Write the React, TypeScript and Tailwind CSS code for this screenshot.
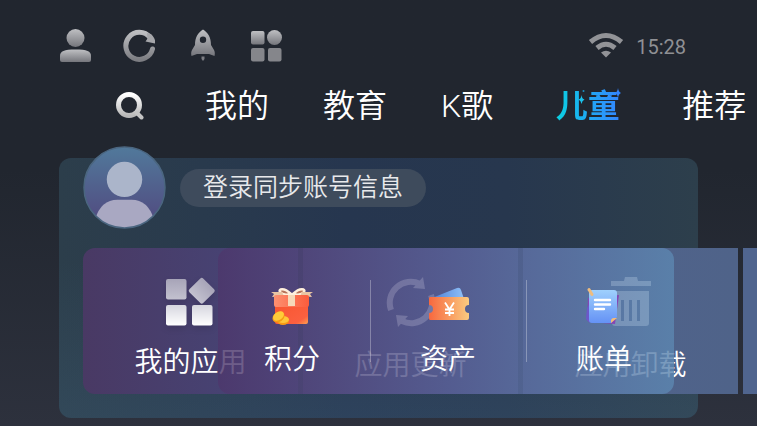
import type { ReactNode } from "react";

const tabBase = "shrink-0 whitespace-nowrap text-[32px] leading-10 text-white";

function UserIcon() {
  return (
    <svg viewBox="0 0 32 34" className="h-[34px] w-8" fill="url(#metal)">
      <circle cx="16.500" cy="10" r="9" />
      <path d="M1 28c0-5 4-6.500 15.500-6.500S32 23 32 28v4a2 2 0 0 1-2 2H3a2 2 0 0 1-2-2z" />
    </svg>
  );
}

function ReloadIcon() {
  return (
    <svg viewBox="0 0 32 34" className="h-[34px] w-8">
      <path
        d="M29.500 21A13.500 13.500 0 1 1 27 9.500"
        fill="none"
        stroke="url(#metalStroke)"
        strokeWidth="5"
        strokeLinecap="round"
      />
      <path d="M24 5l4 1c3 3 4.500 6 4.500 9.500l-10-2 2-3z" fill="#a5a6aa" />
    </svg>
  );
}

function RocketIcon() {
  return (
    <svg viewBox="0 0 32 34" className="h-[34px] w-8" fill="url(#metal)">
      <path
        fillRule="evenodd"
        d="M16 1.500c5 3 8 8 8 15.500l3 5c1 2 1 4 .500 6L22 26H10l-5.500 2c-.500-2-.500-4 .500-6l3-5C8 9.500 11 4.500 16 1.500zm0 7a3.200 3.200 0 1 0 0 6.400 3.200 3.200 0 0 0 0-6.400z"
      />
      <path d="M14.500 28.500h3V31L16 33l-1.500-2z" fill="#7c7d83" />
    </svg>
  );
}

function GridIcon() {
  return (
    <svg viewBox="0 0 32 34" className="h-[34px] w-8" fill="url(#metal)">
      <rect x="0" y="3" width="13.500" height="13.500" rx="2" />
      <circle cx="23.500" cy="9.500" r="7.500" />
      <rect x="0" y="20" width="13.500" height="13.500" rx="2" fill="#85868b" />
      <rect x="17" y="20" width="13.500" height="13.500" rx="2" fill="#85868b" />
    </svg>
  );
}

function WifiIcon() {
  return (
    <svg viewBox="0 0 36 26" className="h-[26px] w-9" fill="none" stroke="#929397" strokeWidth="5">
      <path d="M2.500 10Q18-3 33.500 10" />
      <path d="M9 16Q18 8.500 27 16" />
      <path d="M13 20.500Q18 17 23 20.500L18 25.500z" fill="#929397" stroke="none" />
    </svg>
  );
}

function SearchIcon() {
  return (
    <svg viewBox="0 0 28 28" className="h-7 w-7" fill="none" stroke="url(#silver)" strokeLinecap="round">
      <circle cx="13" cy="13" r="10.500" strokeWidth="5" />
      <path d="M21 21l4.500 4.500" stroke="#c4c4c4" strokeWidth="4" />
    </svg>
  );
}

function AppsIcon() {
  return (
    <svg viewBox="0 0 50 50" className="h-[50px] w-[50px] overflow-visible drop-shadow-md">
      <g fill="url(#lilac)">
        <rect x="0" y="2" width="20.500" height="20.500" rx="2" />
        <rect x="26" y="4" width="19.500" height="19.500" rx="2" transform="rotate(45 35.750 13.750)" />
      </g>
      <g fill="url(#snow)">
        <rect x="0" y="28" width="20.500" height="20.500" rx="2" />
        <rect x="26" y="28" width="20.500" height="20.500" rx="2" />
      </g>
    </svg>
  );
}

function UpdateIcon() {
  return (
    <svg viewBox="0 0 50 50" className="h-[50px] w-[50px]" fill="none" stroke="#fff" strokeWidth="6">
      <path d="M5 33A21 21 0 0 1 34 7" />
      <path d="M45 18A21 21 0 0 1 16 44" />
      <path d="M37 0l2 12-12-1z M12 50l-2-12 12 1z" fill="#fff" stroke="none" />
    </svg>
  );
}

function TrashIcon() {
  return (
    <svg viewBox="0 0 50 50" className="h-[50px] w-[50px]" fill="#fff">
      <path d="M5 4h13l1-4h12l1 4h13v5H5z" />
      <path
        fillRule="evenodd"
        d="M6 14h37v32a3 3 0 0 1-3 3H9a3 3 0 0 1-3-3zm9 9v21h3V23zm8 0v21h3V23zm8 0v21h3V23z"
      />
    </svg>
  );
}

function GiftIcon() {
  return (
    <svg viewBox="0 0 44 44" className="h-11 w-11">
      <path d="M21 10C14 3 8 5 10 8s7 3 11 2zM23 10c7-7 13-5 11-2s-7 3-11 2z" fill="#b77358" stroke="#fff0dc" strokeWidth="2.500" />
      <path d="M12 8L1 8l3 2-2 3 12-1zM32 8l11 0-3 2 2 3-12-1z" fill="#e9c5a3" />
      <rect x="5" y="18" width="33" height="22" rx="2" fill="url(#giftBox)" />
      <rect x="4" y="11" width="35" height="12" rx="2" fill="url(#giftLid)" />
      <path d="M18 11h7v11H18z" fill="#f6d9b9" />
      <ellipse cx="13" cy="37" rx="6" ry="4" fill="#f89a13" />
      <ellipse cx="13" cy="35.500" rx="6" ry="3.500" fill="#ffc53a" />
      <ellipse cx="8.500" cy="33" rx="6.500" ry="5" fill="#f49b12" transform="rotate(-35 8.500 33)" />
      <ellipse cx="8.500" cy="32" rx="6" ry="4" fill="#ffcb39" transform="rotate(-35 8.500 32)" />
    </svg>
  );
}

function TicketIcon() {
  return (
    <svg viewBox="0 0 44 44" className="h-11 w-11">
      <path d="M6 14L31 4q3-1 4 2l3 9z" fill="url(#ticketBack)" />
      <path
        d="M4 13h37q2 0 2 2v6a4 4 0 0 0 0 8v5q0 2-2 2H4q-1 0-1-2v-5a4 4 0 0 0 0-8v-6q0-2 1-2z"
        fill="url(#ticketFront)"
      />
      <path d="M19 18.500l4.500 7 4.500-7M23.500 25v7M19 25.500h9M19 29h9" fill="none" stroke="#fff" strokeWidth="1.800" />
    </svg>
  );
}

function BillIcon() {
  return (
    <svg viewBox="0 0 44 44" className="h-11 w-11">
      <path d="M6 14l31-3-4 29-26-2-2-2z" fill="#8545b4" />
      <path d="M5 24l3-5v20l-4-4z" fill="#6c58c9" />
      <path d="M10 6h22a3 3 0 0 1 3 3v24l-6 6H10a3 3 0 0 1-3-3V9a3 3 0 0 1 3-3z" fill="url(#paper)" />
      <path d="M29 39v-2q0-3 3-3h3z" fill="#f5bb76" />
      <path d="M7 5.500l3 5" stroke="#eebc7e" strokeWidth="3" strokeLinecap="round" />
      <path d="M13 16h15M13 20.500h15M13 25h9" stroke="#fff" strokeWidth="2.400" strokeLinecap="round" />
    </svg>
  );
}

function Gradients() {
  return (
    <svg className="absolute h-0 w-0" aria-hidden="true">
      <defs>
        <linearGradient id="metal" x2="0" y2="1">
          <stop stopColor="#bfc0c3" />
          <stop offset="1" stopColor="#75767c" />
        </linearGradient>
        <linearGradient id="metalStroke" x2="0" y2="1">
          <stop stopColor="#bdbec1" />
          <stop offset="1" stopColor="#7d7e83" />
        </linearGradient>
        <linearGradient id="silver" x2="0" y2="1">
          <stop stopColor="#fff" />
          <stop offset="1" stopColor="#b9b9b9" />
        </linearGradient>
        <linearGradient id="lilac" x2="0" y2="1">
          <stop stopColor="#a7a4b8" />
          <stop offset="1" stopColor="#c3c1cf" />
        </linearGradient>
        <linearGradient id="snow" x2="0" y2="1">
          <stop stopColor="#d6d6df" />
          <stop offset="1" stopColor="#fff" />
        </linearGradient>
        <linearGradient id="giftBox" x2="1" y2="1">
          <stop stopColor="#f8552f" />
          <stop offset=".8" stopColor="#fb6040" />
          <stop offset="1" stopColor="#fda150" />
        </linearGradient>
        <linearGradient id="giftLid">
          <stop stopColor="#fd9070" />
          <stop offset="1" stopColor="#fb5c3c" />
        </linearGradient>
        <linearGradient id="ticketBack">
          <stop stopColor="#4f80d6" />
          <stop offset="1" stopColor="#8fc0f7" />
        </linearGradient>
        <linearGradient id="ticketFront">
          <stop stopColor="#f7683f" />
          <stop offset="1" stopColor="#fbcb80" />
        </linearGradient>
        <linearGradient id="paper" x2="0" y2="1">
          <stop stopColor="#9fd0fd" />
          <stop offset="1" stopColor="#6592f5" />
        </linearGradient>
        <linearGradient id="avatar" x2="0" y2="1">
          <stop stopColor="#51799b" />
          <stop offset="1" stopColor="#51477e" />
        </linearGradient>
      </defs>
    </svg>
  );
}

function Avatar() {
  return (
    <svg viewBox="0 0 82 82" className="h-[83px] w-[83px] shrink-0">
      <clipPath id="avatarClip">
        <circle cx="41" cy="41" r="40" />
      </clipPath>
      <circle cx="41" cy="41" r="40" fill="url(#avatar)" />
      <g clipPath="url(#avatarClip)">
        <circle cx="41" cy="33" r="17.500" fill="#abb5ca" />
        <path d="M12 72q6-19 22-19h14q16 0 22 19v10H12z" fill="#a9a8c2" />
      </g>
      <circle cx="41" cy="41" r="40" fill="none" stroke="#4b6680" strokeWidth="1.500" />
    </svg>
  );
}

function KidsLogo() {
  return (
    <span className="relative flex w-[81px] justify-center text-[32px] leading-10 font-bold">
      <span className="bg-linear-to-r from-[#0bd0e0] via-[#1fa9f3] to-[#3385ff] bg-clip-text text-transparent">
        儿童
      </span>
      <svg viewBox="0 0 80 40" className="absolute top-0 left-0 h-10 w-20">
        <path d="M34.500 9q.500 4 3 4.500-2.500 1-3 4.500-.500-3.500-3-4.500 2.500-.500 3-4.500z" fill="#1cc2ec" />
        <path d="M71 2q.500 4 3 5-2.500 1-3 5-.500-4-3-5 2.500-1 3-5z" fill="#3385ff" />
        <circle cx="36.500" cy="5" r="1" fill="#1e8fc0" />
      </svg>
    </span>
  );
}

const toolbar = [
  { label: "用户", icon: <UserIcon /> },
  { label: "刷新", icon: <ReloadIcon /> },
  { label: "加速", icon: <RocketIcon /> },
  { label: "应用", icon: <GridIcon /> },
];

const shortcuts = [
  { label: "积分", icon: <GiftIcon /> },
  { label: "资产", icon: <TicketIcon /> },
  { label: "账单", icon: <BillIcon /> },
];

interface TileProps {
  label?: string;
  icon?: ReactNode;
  className: string;
}

function Tile({ label, icon, className }: TileProps) {
  return (
    <button
      aria-label={label ?? "更多"}
      className={`flex h-full w-[215px] shrink-0 flex-col items-center pt-[29px] text-[28px] leading-9 whitespace-nowrap text-white ${className}`}
    >
      {icon}
      {label && <span>{label}</span>}
    </button>
  );
}

export default function App() {
  return (
    <div className="min-h-screen overflow-x-hidden bg-linear-to-b from-[#21262f] from-40% to-[#2d313d] font-[Roboto,'Noto_Sans_CJK_SC',sans-serif] font-[350]">
      <Gradients />

      <header className="flex items-center justify-between px-[59px] pt-7">
        <div className="flex gap-8 pr-8">
          {toolbar.map((item) => (
            <button key={item.label} aria-label={item.label}>
              {item.icon}
            </button>
          ))}
        </div>
        <div className="flex items-center gap-3 pr-3">
          <WifiIcon />
          <time className="pt-1 text-xl leading-6 font-normal text-[#8f9094]">15:28</time>
        </div>
      </header>

      <nav className="mt-6 flex items-center gap-[54px] pl-[109px]">
        <button aria-label="搜索" className="flex w-[42px] shrink-0 justify-center">
          <SearchIcon />
        </button>
        <a href="#mine" className={tabBase}>我的</a>
        <a href="#education" className={tabBase}>教育</a>
        <a href="#karaoke" className={tabBase}>K歌</a>
        <a href="#kids" className="shrink-0">
          <KidsLogo />
        </a>
        <a href="#featured" className={tabBase}>推荐</a>
      </nav>

      <main className="mx-[59px] mt-8 mb-2 rounded-xl bg-[linear-gradient(to_bottom,transparent_40%,#45688440),linear-gradient(to_right,#2c3e4b,#26364f_45%,#27374e_70%,#2d3f4c)] px-6 pb-6">
        <div className="flex items-center gap-[14px]">
          <div className="-mt-3">
            <Avatar />
          </div>
          <button className="-mt-3 h-[38px] rounded-full bg-[#3e4b5c] px-[23px] pt-px text-[25px] leading-9 whitespace-nowrap text-[#e8e9eb]">
            登录同步账号信息
          </button>
        </div>

        <div className="relative mt-[19px] h-[146px]">
          <div className="flex h-full gap-[5px]">
            <Tile label="我的应用" icon={<AppsIcon />} className="gap-[18px] rounded-l-xl bg-linear-to-r from-[#493964] to-[#45477a]" />
            <Tile label="应用更新" icon={<UpdateIcon />} className="gap-[21px] bg-linear-to-r from-[#494a78] to-[#50608a]" />
            <Tile label="应用卸载" icon={<TrashIcon />} className="gap-[21px] bg-linear-to-r from-[#50628c] to-[#4f6389]" />
            <Tile className="bg-[#50658f]" />
          </div>

          <div className="absolute inset-y-0 right-0 left-[135px] flex items-start justify-between rounded-xl bg-linear-to-r from-[#4d376c]/82 via-[#555c92]/82 to-[#5c86b0]/82 pt-8 pr-[42px] pl-[46px]">
            {shortcuts.map((item, i) => (
              <div key={item.label} className="contents">
                {i > 0 && <div className="h-[82px] w-px bg-white/30" />}
                <button className="flex w-14 flex-col items-center gap-3.5 pt-1 text-[28px] leading-9 whitespace-nowrap text-white">
                  {item.icon}
                  <span>{item.label}</span>
                </button>
              </div>
            ))}
          </div>
        </div>
      </main>
    </div>
  );
}
